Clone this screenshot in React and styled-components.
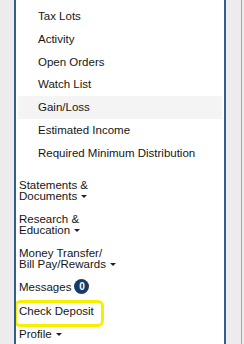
import styled, { createGlobalStyle } from "styled-components";

const GlobalStyle = createGlobalStyle`
  html, body {
    margin: 0;
    padding: 0;
    background: #ececec;
    overflow: hidden;
  }
  body {
    font-family: "Liberation Sans", Arial, sans-serif;
  }
`;

const Page = styled.div`
  display: flex;
  height: 344px;
  width: 244px;
`;

const Gutter = styled.div`
  width: 14px;
  background: #ececec;
  flex-shrink: 0;
`;

const Panel = styled.nav`
  width: 208px;
  flex-shrink: 0;
  background: #fff;
  border-left: 2px solid #335d8d;
  border-right: 2px solid #335d8d;
  overflow: hidden;
`;

const Side = styled.div`
  flex: 1;
  display: flex;
  background: #ececec;

  .track {
    margin-left: auto;
    width: 1px;
    margin-right: 2px;
    background: #a8a8a8;
  }
`;

const SubList = styled.ul`
  list-style: none;
  margin: 0 2px 0 2px;
  padding: 4.6px 0 0;
`;

const SubItem = styled.li`
  height: 22.8px;
  display: flex;
  align-items: center;
  padding-left: 20px;
  font-size: 11.5px;
  color: #161616;
  background: ${({ active }) => (active ? "#f4f4f4" : "transparent")};
`;

const MainList = styled.ul`
  list-style: none;
  margin: 0;
  padding: 9.5px 0 0 3px;
`;

const MainItem = styled.li`
  position: relative;
  padding: 6px 0;
  font-size: 11.5px;
  line-height: 11px;
  color: #161616;

  &::after {
    content: "";
    display: ${({ highlighted }) => (highlighted ? "block" : "none")};
    position: absolute;
    left: -5px;
    top: 0px;
    width: 84px;
    height: 21px;
    border: 3px solid #f4f000;
    border-radius: 6px;
  }
`;

const Caret = styled.span`
  display: inline-block;
  width: 0;
  height: 0;
  margin-left: 4px;
  vertical-align: middle;
  border-left: 3px solid transparent;
  border-right: 3px solid transparent;
  border-top: 3px solid #222;
`;

const Badge = styled.span`
  display: inline-flex;
  align-items: center;
  justify-content: center;
  width: 15px;
  height: 15px;
  margin-left: 3px;
  border-radius: 50%;
  background: #173a68;
  color: #fff;
  font-size: 10px;
  font-weight: bold;
  vertical-align: middle;
  margin-top: -3px;
`;

const subItems = [
  "Tax Lots",
  "Activity",
  "Open Orders",
  "Watch List",
  "Gain/Loss",
  "Estimated Income",
  "Required Minimum Distribution",
];

export default function App() {
  return (
    <>
      <GlobalStyle />
      <Page>
        <Gutter />
        <Panel>
          <SubList>
            {subItems.map((label) => (
              <SubItem key={label} active={label === "Gain/Loss"}>
                {label}
              </SubItem>
            ))}
          </SubList>
          <MainList>
            <MainItem>
              Statements &amp;
              <br />
              Documents
              <Caret />
            </MainItem>
            <MainItem>
              Research &amp;
              <br />
              Education
              <Caret />
            </MainItem>
            <MainItem>
              Money Transfer/
              <br />
              Bill Pay/Rewards
              <Caret />
            </MainItem>
            <MainItem>
              Messages
              <Badge>0</Badge>
            </MainItem>
            <MainItem highlighted>Check Deposit</MainItem>
            <MainItem>
              Profile
              <Caret />
            </MainItem>
          </MainList>
        </Panel>
        <Side>
          <div className="track" />
        </Side>
      </Page>
    </>
  );
}
